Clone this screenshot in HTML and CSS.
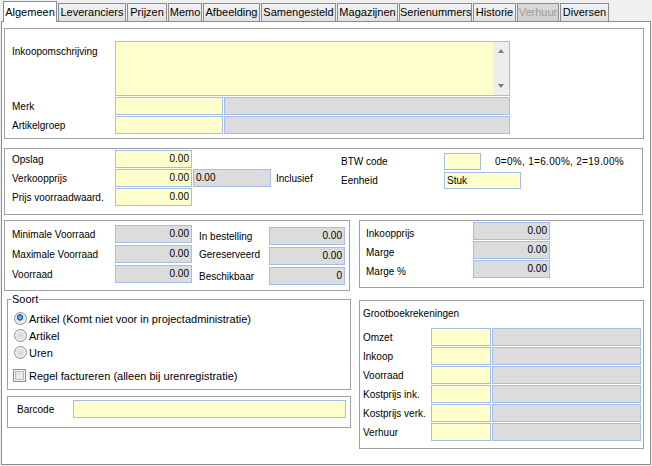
FILE: index.html
```html
<!DOCTYPE html>
<html>
<head>
<meta charset="utf-8">
<link rel="stylesheet" href="styles.css">
</head>
<body>
<div class="tabctl">
  <div class="tabs">
    <div class="tab active t1">Algemeen</div>
    <div class="tab t2">Leveranciers</div>
    <div class="tab t3">Prijzen</div>
    <div class="tab t4">Memo</div>
    <div class="tab t5">Afbeelding</div>
    <div class="tab t6">Samengesteld</div>
    <div class="tab t7">Magazijnen</div>
    <div class="tab t8">Serienummers</div>
    <div class="tab t9">Historie</div>
    <div class="tab disabled t10">Verhuur</div>
    <div class="tab t11">Diversen</div>
  </div>
  <div class="panel">
    <section class="grp g-desc">
      <div class="row row-memo">
        <span class="lbl lbl-top">Inkoopomschrijving</span>
        <div class="fld y memo">
          <div class="sbar"><i class="arr up"></i><i class="arr dn"></i></div>
        </div>
      </div>
      <div class="row"><span class="lbl">Merk</span><div class="fld y w108"></div><div class="fld g w286"></div></div>
      <div class="row"><span class="lbl">Artikelgroep</span><div class="fld y w108"></div><div class="fld g w286"></div></div>
    </section>

    <section class="grp g-price">
      <div class="pcol-left">
        <div class="row"><span class="lbl">Opslag</span><div class="fld y num w77">0.00</div></div>
        <div class="row"><span class="lbl">Verkoopprijs</span><div class="fld y num w77">0.00</div><div class="fld g w78">0.00</div><span class="note">Inclusief</span></div>
        <div class="row"><span class="lbl">Prijs voorraadwaard.</span><div class="fld y num w77">0.00</div></div>
      </div>
      <div class="pcol-right">
        <div class="row"><span class="lbl">BTW code</span><div class="fld y w37 h17"></div><span class="hint">0=0%, 1=6.00%, 2=19.00%</span></div>
        <div class="row"><span class="lbl">Eenheid</span><div class="fld y w77 h17">Stuk</div></div>
      </div>
    </section>

    <div class="lower">
      <div class="lcol">
        <section class="grp g-stock">
          <div class="scol s1">
            <div class="row"><span class="lbl">Minimale Voorraad</span><div class="fld g num w77">0.00</div></div>
            <div class="row"><span class="lbl">Maximale Voorraad</span><div class="fld g num w77">0.00</div></div>
            <div class="row"><span class="lbl">Voorraad</span><div class="fld g num w77">0.00</div></div>
          </div>
          <div class="scol s2">
            <div class="row"><span class="lbl">In bestelling</span><div class="fld g num w76">0.00</div></div>
            <div class="row"><span class="lbl up3">Gereserveerd</span><div class="fld g num w76">0.00</div></div>
            <div class="row"><span class="lbl">Beschikbaar</span><div class="fld g num w76">0</div></div>
          </div>
        </section>

        <fieldset class="soort">
          <legend>Soort</legend>
          <div class="opt"><span class="radio on"></span>Artikel (Komt niet voor in projectadministratie)</div>
          <div class="opt"><span class="radio"></span>Artikel</div>
          <div class="opt"><span class="radio"></span>Uren</div>
          <div class="opt opt-chk"><span class="check"></span>Regel factureren (alleen bij urenregistratie)</div>
        </fieldset>

        <section class="grp g-bar">
          <div class="row"><span class="lbl">Barcode</span><div class="fld y w273"></div></div>
        </section>
      </div>

      <div class="rcol">
        <section class="grp g-cost">
          <div class="row"><span class="lbl">Inkoopprijs</span><div class="fld g num w77">0.00</div></div>
          <div class="row"><span class="lbl">Marge</span><div class="fld g num w77">0.00</div></div>
          <div class="row"><span class="lbl">Marge %</span><div class="fld g num w77">0.00</div></div>
        </section>

        <section class="grp g-ledger">
          <div class="title">Grootboekrekeningen</div>
          <div class="rows">
            <div class="row"><span class="lbl">Omzet</span><div class="fld y w60"></div><div class="fld g w149"></div></div>
            <div class="row"><span class="lbl">Inkoop</span><div class="fld y w60"></div><div class="fld g w149"></div></div>
            <div class="row"><span class="lbl">Voorraad</span><div class="fld y w60"></div><div class="fld g w149"></div></div>
            <div class="row"><span class="lbl">Kostprijs ink.</span><div class="fld y w60"></div><div class="fld g w149"></div></div>
            <div class="row"><span class="lbl">Kostprijs verk.</span><div class="fld y w60"></div><div class="fld g w149"></div></div>
            <div class="row"><span class="lbl">Verhuur</span><div class="fld y w60"></div><div class="fld g w149"></div></div>
          </div>
        </section>
      </div>
    </div>
  </div>
</div>
</body>
</html>
```

FILE: styles.css
```css
* { box-sizing: border-box; }
html, body { margin: 0; padding: 0; }
body {
  width: 652px;
  height: 466px;
  overflow: hidden;
  background: #f0f0f0;
  font-family: "Liberation Sans", Arial, sans-serif;
  font-size: 10px;
  color: #000;
}
.tabctl { padding-left: 1px; }

/* tabs */
.tabs {
  display: flex;
  align-items: flex-end;
  height: 21px;
  padding-left: 2px;
  font-size: 11px;
}
.tab {
  height: 18px;
  border: 1px solid #898c95;
  border-bottom: none;
  background: linear-gradient(#f2f2f2, #e1e1e1);
  line-height: 17px;
  text-align: center;
  white-space: nowrap;
  margin-left: 1px;
}
.tab.active {
  height: 21px;
  margin-left: 0;
  margin-bottom: -1px;
  background: #fff;
  line-height: 21px;
  position: relative;
  z-index: 1;
}
.tab.disabled { color: #9c9c9c; background: linear-gradient(#dadada, #cfcfcf); }
.t1 { width: 54px; }
.t2 { width: 68px; }
.t3 { width: 40px; }
.t4 { width: 34px; }
.t5 { width: 57px; }
.t6 { width: 75px; }
.t7 { width: 61px; }
.t8 { width: 73px; }
.t9 { width: 43px; }
.t10 { width: 42px; }
.t11 { width: 49px; }

/* panel */
.panel {
  width: 650px;
  height: 444px;
  border: 1px solid #898c95;
  background: #fff;
  padding: 6px 0 0 2px;
}
.grp { border: 1px solid #a0a0a0; }
.row { display: flex; align-items: center; }
.lbl { white-space: nowrap; }

/* fields */
.fld {
  height: 18px;
  border: 1px solid #a4bce8;
  line-height: 16px;
  padding: 0 2px;
  white-space: nowrap;
  flex: none;
}
.fld + .fld { margin-left: 1px; }
.y { background: #ffffcc; }
.g { background: #dcdcdc; }
.num { text-align: right; }
.h17 { height: 17px; line-height: 15px; }
.w37 { width: 37px; }
.w60 { width: 60px; }
.w76 { width: 76px; }
.w77 { width: 77px; }
.w78 { width: 78px; }
.w108 { width: 108px; }
.w149 { width: 149px; }
.w273 { width: 273px; }
.w286 { width: 286px; }

/* description group */
.g-desc {
  width: 640px;
  height: 111px;
  padding: 12px 0 4px 0;
  display: flex;
  flex-direction: column;
  gap: 1px;
}
.g-desc .lbl { width: 110px; padding-left: 7px; }
.row-memo { align-items: flex-start; }
.lbl-top { padding-top: 5px; line-height: 12px; }
.memo {
  width: 395px;
  height: 55px;
  padding: 0;
  display: flex;
  justify-content: flex-end;
}
.sbar {
  width: 16px;
  height: 100%;
  background: #eeeeee;
  display: flex;
  flex-direction: column;
  justify-content: space-between;
  align-items: center;
  padding: 7px 0 7px 0;
}
.arr { display: block; width: 0; height: 0; border-left: 3.5px solid transparent; border-right: 3.5px solid transparent; }
.arr.up { border-bottom: 4px solid #7d7d7d; }
.arr.dn { border-top: 4px solid #7d7d7d; }

/* price group */
.g-price {
  width: 639px;
  height: 67px;
  margin-top: 9px;
  padding-top: 1px;
  display: flex;
}
.pcol-left { width: 336px; display: flex; flex-direction: column; gap: 1px; }
.pcol-left .lbl { width: 110px; padding-left: 7px; }
.note { margin-left: 5px; }
.pcol-right { padding-top: 3px; display: flex; flex-direction: column; gap: 2px; }
.pcol-right .lbl { width: 103px; }
.hint { margin-left: 14px; letter-spacing: 0.3px; }

/* lower area */
.lower { display: flex; margin-top: 5px; }
.lcol { width: 347px; }
.rcol { width: 285px; margin-left: 8px; }

.g-stock {
  width: 346px;
  height: 71px;
  display: flex;
  padding-top: 4px;
}
.scol { display: flex; flex-direction: column; gap: 2px; }
.s1 .lbl { width: 110px; padding-left: 7px; }
.s2 { padding-top: 2px; }
.s2 .lbl { width: 77px; padding-left: 7px; }
.up3 { position: relative; top: -2px; }

/* soort fieldset */
.soort {
  margin: 2px 0 0 3px;
  padding: 4px 0 5px 3px;
  border: 1px solid #a0a0a0;
  min-width: 0;
  font-size: 11px;
}
.soort legend {
  padding: 0 1px;
  line-height: 13px;
  font-size: 11px;
}
.opt { display: flex; align-items: center; height: 17px; white-space: nowrap; }
.opt-chk { margin-top: 6px; }
.radio {
  width: 13px;
  height: 13px;
  border-radius: 50%;
  margin: 0 2px 0 3px;
  border: 1px solid #8e8f8f;
  background: radial-gradient(circle at 50% 50%, #d6d6d6 0, #e9e9e9 55%, #fbfbfb 100%);
  flex: none;
}
.radio.on {
  background:
    radial-gradient(circle at 45% 40%, #a8d4fb 0, #3a86d6 1.8px, #1a56a6 3px, transparent 3.4px),
    radial-gradient(circle at 50% 50%, #d6d6d6 0, #e9e9e9 55%, #fbfbfb 100%);
}
.check {
  width: 13px;
  height: 13px;
  margin: 0 3px 0 2px;
  border: 1px solid #8e8f8f;
  background: linear-gradient(135deg, #d9dce1, #f8f8f8);
  box-shadow: inset 0 0 0 1px #f4f4f4, inset 0 0 0 2px #b8bcc2;
  flex: none;
}

.g-bar {
  margin: 6px 0 0 3px;
  height: 32px;
  padding-top: 3px;
}
.g-bar .lbl { width: 65px; padding-left: 9px; }

/* cost group */
.g-cost {
  height: 68px;
  padding-top: 1px;
  display: flex;
  flex-direction: column;
  gap: 1px;
}
.g-cost .lbl { width: 113px; padding-left: 6px; padding-top: 4px; }

/* ledger group */
.g-ledger {
  margin-top: 12px;
  height: 149px;
  padding-top: 7px;
}
.g-ledger .title { line-height: 12px; padding-left: 3px; margin-bottom: 8px; }
.g-ledger .rows { display: flex; flex-direction: column; gap: 1px; }
.g-ledger .lbl { width: 71px; padding-left: 3px; }
```
